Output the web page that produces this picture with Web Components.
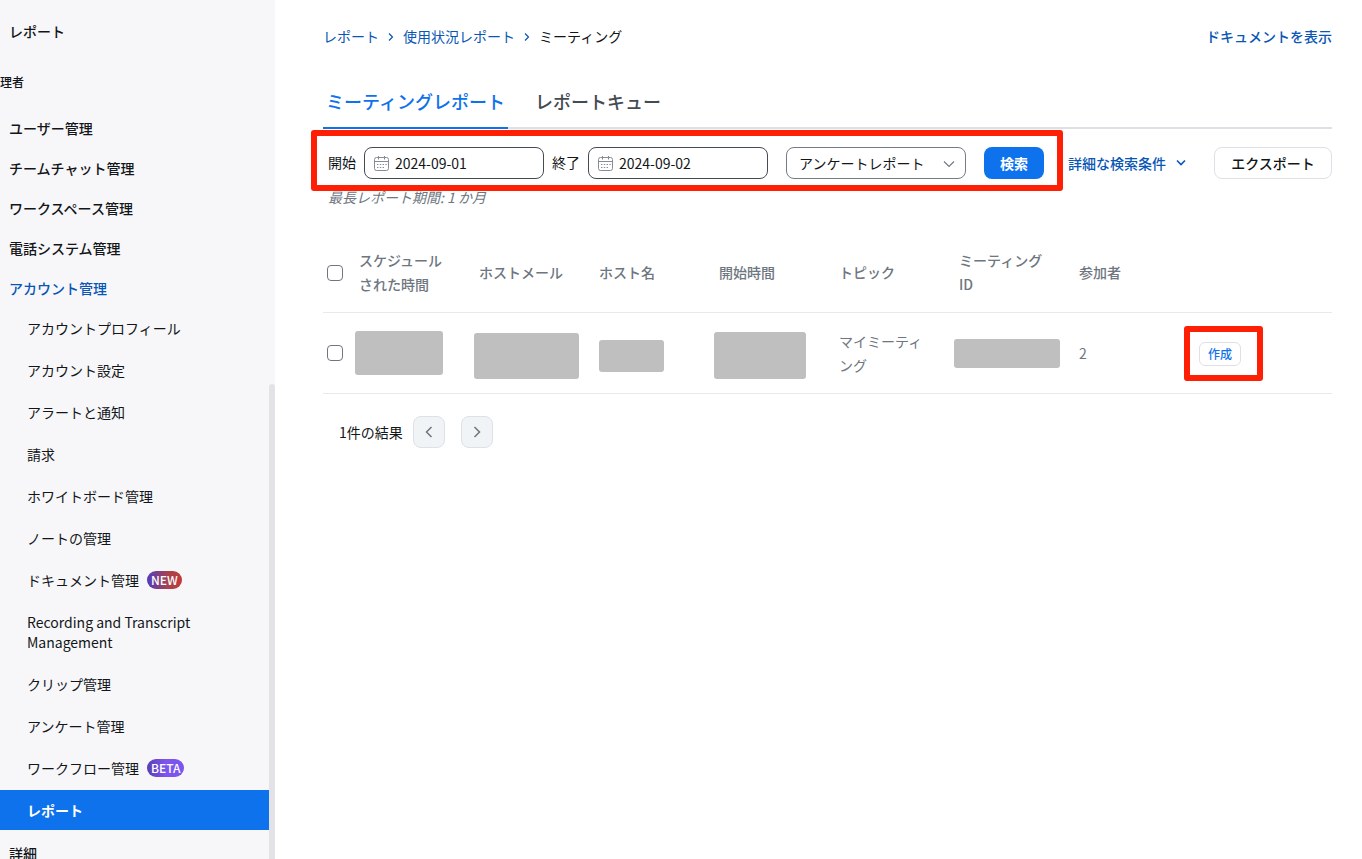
<!DOCTYPE html>
<html lang="ja">
<head>
<meta charset="utf-8">
<meta name="viewport" content="width=device-width, initial-scale=1">
<title>ミーティングレポート</title>
<style>
  html, body { margin: 0; height: 100%; }
  body {
    font-family: "Noto Sans CJK JP", sans-serif;
    font-size: 14px;
    line-height: 20px;
    color: #131619;
    background: #fff;
    overflow: hidden;
    --blue: #0e72ed;
    --link: #0956b5;
    --line: #dfe0e6;
    --muted: #6e7680;
    --mark: #ff1f05;
  }
</style>
</head>
<body>
<report-app>
  <side-nav slot="nav">
    <nav-item>レポート</nav-item>
    <nav-heading>理者</nav-heading>
    <nav-item>ユーザー管理</nav-item>
    <nav-item>チームチャット管理</nav-item>
    <nav-item>ワークスペース管理</nav-item>
    <nav-item>電話システム管理</nav-item>
    <nav-item open>アカウント管理</nav-item>
    <nav-group>
      <nav-item sub>アカウントプロフィール</nav-item>
      <nav-item sub>アカウント設定</nav-item>
      <nav-item sub>アラートと通知</nav-item>
      <nav-item sub>請求</nav-item>
      <nav-item sub>ホワイトボード管理</nav-item>
      <nav-item sub>ノートの管理</nav-item>
      <nav-item sub>ドキュメント管理<nav-badge slot="badge">NEW</nav-badge></nav-item>
      <nav-item sub>Recording and Transcript Management</nav-item>
      <nav-item sub>クリップ管理</nav-item>
      <nav-item sub>アンケート管理</nav-item>
      <nav-item sub>ワークフロー管理<nav-badge slot="badge" beta>BETA</nav-badge></nav-item>
      <nav-item sub current>レポート</nav-item>
    </nav-group>
    <nav-item>詳細</nav-item>
  </side-nav>
  <page-header></page-header>
  <tab-bar></tab-bar>
  <filter-bar></filter-bar>
  <report-table></report-table>
  <result-pager></result-pager>
</report-app>

<script>
const define = (name, html, setup) => customElements.define(name, class extends HTMLElement {
  constructor() {
    super();
    const tpl = document.createElement('template');
    tpl.innerHTML = '<style>*{box-sizing:border-box}a{color:inherit;text-decoration:none}button,input,select{font:inherit;color:inherit;margin:0}</style>' + html;
    this.attachShadow({ mode: 'open' }).append(tpl.content.cloneNode(true));
  }
  connectedCallback() { if (setup) setup(this, this.shadowRoot); }
});

define('report-app', `
  <style>
    :host { display: grid; grid-template-columns: 275px minmax(0, 1fr); height: 100vh; }
    main { padding: 26px 30px 24px 48px; overflow: hidden; }
  </style>
  <slot name="nav"></slot>
  <main><slot></slot></main>`);

define('side-nav', `
  <style>
    :host { display: grid; grid-template-columns: minmax(0, 1fr) 6px; background: #f7f7fa; overflow: hidden; }
    nav { padding-top: 11px; min-height: 0; overflow: hidden; }
    .track { display: flex; flex-direction: column; padding-top: 384px; }
    .thumb { flex: 1; background: #e2e2e7; border-radius: 3px 3px 0 0; }
  </style>
  <nav aria-label="管理"><slot></slot></nav>
  <div class="track"><div class="thumb"></div></div>`);

define('nav-heading', `
  <style>
    :host { display: block; font-size: 12px; font-weight: 500; padding: 21px 0 16px; }
  </style>
  <slot></slot>`);

define('nav-group', `
  <style>
    :host { display: flex; flex-direction: column; gap: 2px; padding-bottom: 3px; }
  </style>
  <slot></slot>`);

define('nav-item', `
  <style>
    :host { display: block; font-weight: 500; }
    :host([sub]) { font-weight: 400; }
    :host([open]) { color: var(--link); }
    :host([current]) { background: var(--blue); color: #fff; font-weight: 700; }
    a { display: flex; align-items: center; gap: 8px; padding: 10px 9px; }
    :host([sub]) a { padding: 10px 60px 10px 27px; }
  </style>
  <a href="#"><span><slot></slot></span><slot name="badge"></slot></a>`,
  (el, root) => { if (el.hasAttribute('current')) root.querySelector('a').setAttribute('aria-current', 'page'); });

define('nav-badge', `
  <style>
    :host {
      display: block; height: 18px; padding: 0 4px; border-radius: 9px;
      font-size: 12px; line-height: 18px; font-weight: 500; color: #fff;
      background: linear-gradient(90deg, #4f3cc0, #a8434c 60%, #c03a3e);
    }
    :host([beta]) { background: linear-gradient(90deg, #5a3fb0, #7b55ee 50%, #7b55ee); }
  </style>
  <slot></slot>`);

define('page-header', `
  <style>
    :host { display: flex; justify-content: space-between; color: var(--link); }
    ol { display: flex; align-items: center; list-style: none; margin: 0; padding: 0; }
    li { display: flex; align-items: center; }
    li svg { margin: 2px 9px 0; }
    .here { color: #131619; }
    .doc { font-weight: 500; }
  </style>
  <nav aria-label="パンくずリスト"><ol>
    <li><a href="#">レポート</a><svg width="6" height="10" viewBox="0 0 6 10" fill="none" stroke="currentColor" stroke-width="1.2"><path d="M1 1.5 4.5 5 1 8.5"/></svg></li>
    <li><a href="#">使用状況レポート</a><svg width="6" height="10" viewBox="0 0 6 10" fill="none" stroke="currentColor" stroke-width="1.2"><path d="M1 1.5 4.5 5 1 8.5"/></svg></li>
    <li class="here" aria-current="page">ミーティング</li>
  </ol></nav>
  <a class="doc" href="#">ドキュメントを表示</a>`);

define('tab-bar', `
  <style>
    :host { display: flex; gap: 24px; margin-top: 42px; border-bottom: 2px solid var(--line); font-size: 18px; line-height: 26px; font-weight: 500; color: #444b53; }
    button { border: 0; background: none; padding: 0 3px 13px; margin-bottom: -2px; border-bottom: 2px solid transparent; }
    button[aria-selected=true] { color: var(--blue); border-color: var(--blue); }
  </style>
  <button role="tab" aria-selected="true">ミーティングレポート</button>
  <button role="tab" aria-selected="false">レポートキュー</button>`);

define('date-field', `
  <style>
    :host { display: flex; align-items: center; gap: 8px; }
    label { padding-bottom: 3px; }
    .box { display: flex; align-items: center; gap: 6px; width: 180px; height: 32px; padding: 0 9px; border: 1px solid #444b53; border-radius: 8px; background: #fff; }
    svg { flex: none; color: #858c95; }
    input { flex: 1; min-width: 0; border: 0; padding: 0; outline: 0; background: none; }
  </style>
  <label for="date"></label>
  <span class="box">
    <svg width="15" height="15" viewBox="0 0 15 15" fill="none" stroke="currentColor">
      <rect x=".5" y="1.5" width="14" height="13" rx="2"/><path d="M.5 5.5h14M4.5 0v3.5M10.5 0v3.5"/>
      <path d="M3 8.5h10M3 11.5h8" stroke-dasharray="1.4 1.4"/>
    </svg>
    <input id="date" type="text">
  </span>`,
  (el, root) => {
    root.querySelector('label').textContent = el.getAttribute('label');
    root.querySelector('input').value = el.getAttribute('value');
  });

define('mark-frame', `
  <style>
    :host { display: inline-flex; position: relative; }
    .frame { position: absolute; inset: var(--inset); border: 6px solid var(--mark); border-radius: 3px; pointer-events: none; z-index: 1; }
  </style>
  <slot></slot><div class="frame"></div>`);

define('filter-bar', `
  <style>
    :host { display: block; padding: 18px 0 0 5px; }
    .row { display: flex; align-items: center; }
    mark-frame { --inset: -17px -19px -12px -17px; align-items: center; }
    date-field { margin-right: 8px; }
    .pick { position: relative; margin: 0 18px 0 10px; }
    select { display: block; appearance: none; width: 180px; height: 32px; padding: 0 32px 0 12px; border: 1px solid #747b84; border-radius: 8px; background: #fff; }
    .pick svg { position: absolute; right: 11px; top: 13px; color: #747b84; pointer-events: none; }
    button { height: 32px; border: 0; border-radius: 8px; background: none; }
    .search { width: 60px; background: var(--blue); color: #fff; font-weight: 700; }
    .more { display: flex; align-items: center; gap: 10px; margin-left: 24px; color: var(--link); font-weight: 500; }
    .export { width: 118px; margin-left: auto; border: 1px solid var(--line); font-weight: 500; }
    p { margin: 8px 0 0; font-style: italic; color: var(--muted); }
  </style>
  <div class="row">
    <mark-frame>
      <date-field label="開始" value="2024-09-01"></date-field>
      <date-field label="終了" value="2024-09-02"></date-field>
      <span class="pick">
        <select aria-label="レポートの種類"><option>アンケートレポート</option></select>
        <svg width="12" height="8" viewBox="0 0 12 8" fill="none" stroke="currentColor" stroke-width="1.2"><path d="M1 1.5 6 6.5 11 1.5"/></svg>
      </span>
      <button class="search">検索</button>
    </mark-frame>
    <a class="more" href="#">詳細な検索条件<svg width="10" height="8" viewBox="0 0 10 8" fill="none" stroke="currentColor" stroke-width="1.6"><path d="M1 1.5 5 5.5 9 1.5"/></svg></a>
    <button class="export">エクスポート</button>
  </div>
  <p>最長レポート期間: 1 か月</p>`);

define('masked-value', `
  <style>
    :host { position: absolute; border-radius: 3px; background: #bfbfbf; }
  </style>`,
  el => {
    const [left, top, width, height] = el.getAttribute('box').split(' ');
    Object.assign(el.style, { left: left + 'px', top: top + 'px', width: width + 'px', height: height + 'px' });
  });

define('report-table', `
  <style>
    :host { display: block; margin-top: 26px; line-height: 24px; color: var(--muted); }
    table { width: 100%; table-layout: fixed; border-collapse: separate; border-spacing: 0; }
    .tick { width: 20px; } .data { width: 120px; }
    th, td { height: 81px; padding: 0 16px; border-bottom: 1px solid #e8e8ef; text-align: left; vertical-align: middle; position: relative; }
    thead th { height: 80px; padding-bottom: 2px; font-weight: 500; }
    th:first-child, td:first-child { padding: 0 0 0 4px; }
    input { display: block; appearance: none; width: 16px; height: 16px; border: 1px solid #6e7680; border-radius: 4px; background: #fff; }
    td { word-break: break-all; }
    mark-frame { --inset: -16px -22px -15px -15px; vertical-align: middle; }
    button { width: 42px; height: 24px; padding: 0; border: 1px solid var(--line); border-radius: 6px; background: #fff; color: var(--blue); font-size: 12px; line-height: 20px; font-weight: 500; }
  </style>
  <table>
    <colgroup><col class="tick"><col class="data" span="7"><col></colgroup>
    <thead><tr>
      <th><input type="checkbox" aria-label="すべて選択"></th>
      <th>スケジュールされた時間</th><th>ホストメール</th><th>ホスト名</th><th>開始時間</th><th>トピック</th><th>ミーティング ID</th><th>参加者</th><th></th>
    </tr></thead>
    <tbody><tr>
      <td><input type="checkbox" aria-label="行を選択"></td>
      <td><masked-value box="12 18 88 44"></masked-value></td>
      <td><masked-value box="11 20 105 46"></masked-value></td>
      <td><masked-value box="16 27 65 32"></masked-value></td>
      <td><masked-value box="11 19 92 47"></masked-value></td>
      <td>マイミーティング</td>
      <td><masked-value box="11 26 106 29"></masked-value></td>
      <td>2</td>
      <td><mark-frame><button>作成</button></mark-frame></td>
    </tr></tbody>
  </table>`);

define('result-pager', `
  <style>
    :host { display: flex; align-items: center; padding: 22px 0 0 16px; }
    .nav { display: flex; gap: 16px; margin-left: 10px; }
    button { display: grid; place-items: center; width: 32px; height: 32px; padding: 0; border: 1px solid var(--line); border-radius: 8px; background: #f1f4f6; color: #6e7680; }
  </style>
  <span>1件の結果</span>
  <span class="nav">
    <button aria-label="前へ"><svg width="8" height="12" viewBox="0 0 8 12" fill="none" stroke="currentColor" stroke-width="1.5"><path d="M6.5 1 1.5 6 6.5 11"/></svg></button>
    <button aria-label="次へ"><svg width="8" height="12" viewBox="0 0 8 12" fill="none" stroke="currentColor" stroke-width="1.5"><path d="M1.5 1 6.5 6 1.5 11"/></svg></button>
  </span>`);
</script>
</body>
</html>
